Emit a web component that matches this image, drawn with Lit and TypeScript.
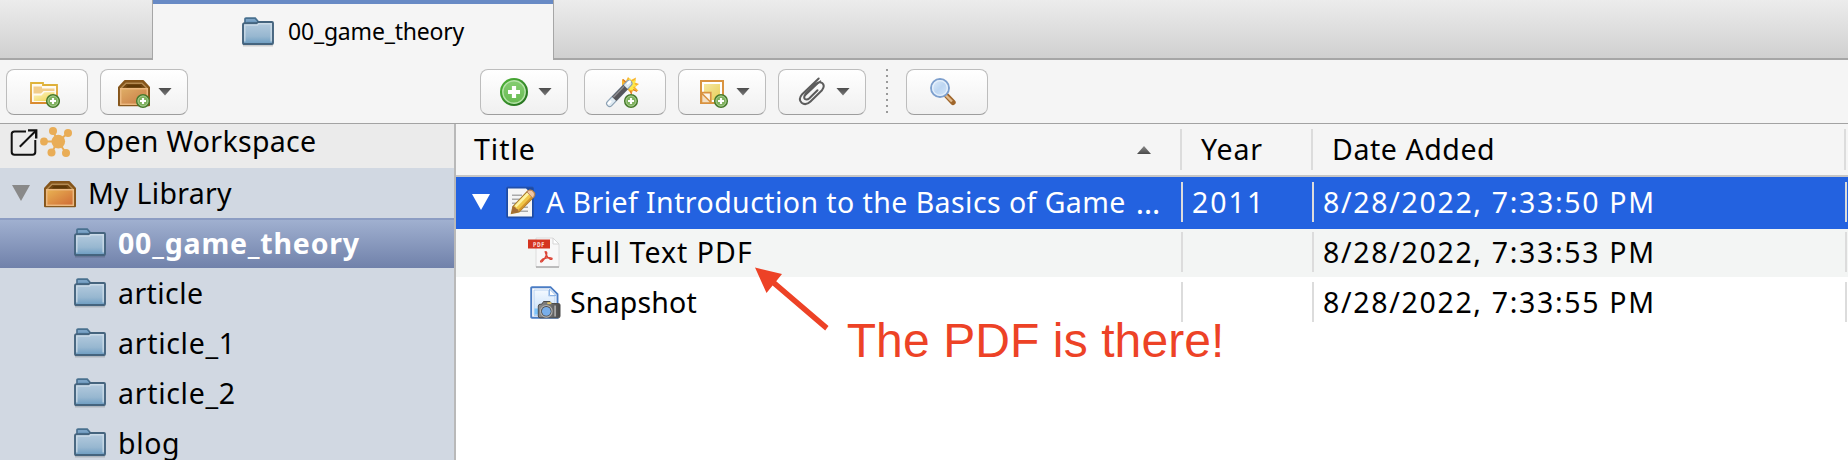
import { LitElement, html, svg, css } from "lit";
import { customElement, property } from "lit/decorators.js";
import { classMap } from "lit/directives/class-map.js";

const badge = (cx: number, cy: number) => svg`
  <g transform="translate(${cx} ${cy})">
    <circle r="6.3" fill="#7db05c" stroke="#47792c" stroke-width="1.5"/>
    <circle r="5" fill="none" stroke="#a9cd92" stroke-width="1"/>
    <path d="M-3 0H3M0-3V3" stroke="#fff" stroke-width="2.2"/>
  </g>`;

const box = (id: string, face1: string, face2: string) => svg`
  <linearGradient id="${id}" x1="0" y1="0" x2="1" y2="1">
    <stop offset="0" stop-color="${face1}"/><stop offset="1" stop-color="${face2}"/>
  </linearGradient>
  <path d="M7 1H25L31 7.5V26H1V7.5Z" fill="#8a5a1c"/>
  <path d="M7 1H25L31 7.5V25.2H1V7.5Z" fill="none" stroke="#85551b" stroke-width="2" stroke-linejoin="round"/>
  <path d="M7.5 2.6H24.5L29 7.8H3Z" fill="#704510"/>
  <path d="M3.2 8L8 3.2H24L28.8 8" fill="none" stroke="#b48a52" stroke-width="1.4"/>
  <path d="M8 7.6L10 5H22L24 7.6Z" fill="#5d3808"/>
  <rect x="2.7" y="8.7" width="26.6" height="15.6" fill="url(#${id})" stroke="#ecb980" stroke-width="1.5"/>`;

const icons: Record<string, () => unknown> = {
  folder: () => html`<svg width="32" height="31" viewBox="0 0 32 31">
    <linearGradient id="f" x1="0" y1="0" x2="0" y2="1">
      <stop offset="0" stop-color="#b6ccdf"/><stop offset=".65" stop-color="#97b7d0"/><stop offset="1" stop-color="#6c9cc1"/>
    </linearGradient>
    <path d="M1 28.3H31" stroke="#000" stroke-opacity=".16" stroke-width="2.4"/>
    <path d="M3 7V2.2Q3 1.2 4 1.2H13.2L17 5.5V8H3Z" fill="#7ba3c6" stroke="#48708f" stroke-width="1.7"/>
    <path d="M4.5 5.5H14" stroke="#5585ad" stroke-width="1.6"/>
    <path d="M1 8Q1 6.3 2.5 6.3H14.5L16 5H30Q31 5 31 6V26Q31 27 30 27H2Q1 27 1 26Z" fill="url(#f)" stroke="#45647e" stroke-width="1.9"/>
    <path d="M2.8 24.5V7.9H15.6L16.6 6.8H29.2V24.5" fill="none" stroke="#d3e0eb" stroke-opacity=".75" stroke-width="1.5"/>
  </svg>`,
  library: () => html`<svg width="32" height="27" viewBox="0 0 32 27">${box("b1", "#e9b353", "#cf6a35")}</svg>`,
  newCollection: () => html`<svg width="36" height="36" viewBox="0 0 36 36">
    <linearGradient id="nc" x1="0" y1="0" x2="0" y2="1"><stop offset="0" stop-color="#dfb43a"/><stop offset="1" stop-color="#d98a2f"/></linearGradient>
    <linearGradient id="nf" x1="0" y1="0" x2="1" y2="1"><stop offset="0" stop-color="#fbf3c0"/><stop offset="1" stop-color="#f0d24e"/></linearGradient>
    <path d="M7 9H19V11H33V29H7Z" fill="#fffaf0" stroke="url(#nc)" stroke-width="1.8"/>
    <path d="M9.5 12.5H18V14.5H30.5V17H19.5L17 19.5H9.5Z" fill="#f2cd8a"/>
    <path d="M9.8 21.5H17.5L20.5 18.3H30.5V27H9.8Z" fill="url(#nf)"/>
    ${badge(29, 27)}
  </svg>`,
  newLibrary: () => html`<svg width="36" height="36" viewBox="0 0 36 36">
    <g transform="translate(0 6)">${box("b2", "#dfae66", "#c97a45")}</g>${badge(25, 27)}
  </svg>`,
  add: () => html`<svg width="36" height="36" viewBox="0 0 36 36">
    <linearGradient id="a1" x1="0" y1="0" x2="1" y2="1"><stop offset="0" stop-color="#52b93a"/><stop offset="1" stop-color="#1f691b"/></linearGradient>
    <linearGradient id="a2" x1="0" y1="0" x2="0" y2="1"><stop offset="0" stop-color="#85cd72"/><stop offset="1" stop-color="#68bb52"/></linearGradient>
    <circle cx="16" cy="18" r="14" fill="url(#a1)"/>
    <circle cx="16" cy="18" r="11.2" fill="url(#a2)" stroke="#b5e2a8" stroke-width="1.4"/>
    <path d="M10 18H22M16 12V24" stroke="#fff" stroke-width="4.2"/>
  </svg>`,
  wand: () => html`<svg width="37" height="36" viewBox="0 0 37 36">
    <path d="M20 5L24 7L26 3L29 6L34 3.5L33 8.5L37 10L33 13L36.5 17L31 16.5L29.5 20L26 16L20 12Z" fill="#f9b52c"/>
    <path d="M24 8L28 4L30 7.5L34 5.5L32.5 10L35 12L31 13L33 16L28 16Z" fill="#fde94a"/>
    <path d="M21 5.5L24 8.5M35 17.5L31 15.5M29.5 20L28.5 17" stroke="#e07a28" stroke-width="1.3"/>
    <path d="M7.6 29.5L27 9.4" stroke="#8ba0b3" stroke-width="7" stroke-linecap="round"/>
    <path d="M7.6 29.5L27 9.4" stroke="#dfeaf2" stroke-width="4.8" stroke-linecap="round"/>
    <path d="M12.1 24.9L23.6 13" stroke="#55555a" stroke-width="6.2"/>
    <path d="M11.4 23.2L22 12.2" stroke="#8d8d92" stroke-width="1.5"/>
    <path d="M6.5 29.5L8.5 27.5M25.8 9.5L27.8 7.5" stroke="#fff" stroke-width="2.2" stroke-linecap="round"/>
    ${badge(29, 27)}
  </svg>`,
  note: () => html`<svg width="36" height="36" viewBox="0 0 36 36">
    <linearGradient id="n" x1="0" y1="0" x2="1" y2="1"><stop offset="0" stop-color="#f6e7a0"/><stop offset="1" stop-color="#e8cf58"/></linearGradient>
    <rect x="5" y="7" width="22" height="22" fill="#fff" stroke="#d99340" stroke-width="2"/>
    <rect x="8" y="10" width="16" height="16" fill="url(#n)"/>
    <path d="M5 18H15.5V29H5Z" fill="#fdf6ea"/>
    <path d="M5 18.7H14.8V29" fill="none" stroke="#d99340" stroke-width="1.8"/>
    <path d="M5.5 19L15 28.5V29H5.5Z" fill="#f3dfc2" stroke="#d99340" stroke-width="1.6"/>
    ${badge(25, 27)}
  </svg>`,
  clip: () => html`<svg width="36" height="36" viewBox="0 0 36 36">
    <g fill="none" stroke="#5c5c5c" stroke-width="2" stroke-linecap="round" stroke-linejoin="round">
      <path d="M22.7 4.5L6.2 20.2Q1.8 25.5 5.6 28.8Q9.8 32 14.5 27.5L26 16.2Q29.4 11.8 26.2 9Q23 7 19.6 10.2L9.6 20Q7.2 23.2 8.9 25Q11 26.4 13.4 24.2L21.5 16.2"/>
      <path d="M24.5 7L9 21.8" stroke-width="1.3"/>
    </g>
  </svg>`,
  search: () => html`<svg width="36" height="36" viewBox="0 0 36 36">
    <linearGradient id="s" x1="0" y1="0" x2="1" y2="1"><stop offset="0" stop-color="#e4effb"/><stop offset=".5" stop-color="#bdd6f2"/><stop offset="1" stop-color="#d6e7f9"/></linearGradient>
    <path d="M22.5 21.5L29 28.3" stroke="#a0662b" stroke-width="5.4" stroke-linecap="round"/>
    <path d="M21.5 21L28 27.5" stroke="#e0b98c" stroke-width="2.4"/>
    <circle cx="16" cy="14" r="9" fill="url(#s)" stroke="#7d9fcd" stroke-width="1.9"/>
    <circle cx="16" cy="14" r="7.3" fill="none" stroke="#e6f0fb" stroke-width="1.3"/>
  </svg>`,
  external: () => html`<svg width="30" height="30" viewBox="0 0 30 30">
    <g fill="none" stroke="#111" stroke-width="2">
      <path d="M16 3.4H4.5Q1.7 3.4 1.7 6V24Q1.7 26.8 4.5 26.8H22.5Q25.3 26.8 25.3 24V12"/>
      <path d="M9.8 18.8L25.6 3"/><path d="M18 2.4H26.2V10.5" stroke-width="2.4"/>
    </g>
  </svg>`,
  workspace: () => html`<svg width="32" height="32" viewBox="0 0 32 32">
    <g fill="#e9ad57" stroke="#e9ad57" stroke-width="2">
      <path d="M18 15.5L13 5M18 15.5L28 7M18 15.5H4M18 15.5L11.5 26.5M18 15.5L26 27"/>
      <g stroke="none"><circle cx="18.3" cy="15.6" r="6.8"/><circle cx="13" cy="5" r="4"/><circle cx="28" cy="7" r="4"/>
      <circle cx="4" cy="15.5" r="3.9"/><circle cx="11.5" cy="26.6" r="4"/><circle cx="26" cy="27" r="4"/></g>
    </g>
  </svg>`,
  article: () => html`<svg width="30" height="33" viewBox="0 0 30 33">
    <rect x=".7" y="1.2" width="26.6" height="30.6" rx="1" fill="#1c4aa4" stroke="#2450a8" stroke-width="1"/>
    <path d="M2 2.5H20L26 8V30.5H2Z" fill="#f5f5f5"/>
    <path d="M6 9.2H16M6 13.2H14M6 17.2H11M17 17.2H22M6 21.2H9M16 21.2H22M14 25.2H22" stroke="#aaa" stroke-width="1.5"/>
    <path d="M5.5 27.3L7 20.5L22 4.8Q25.5 3 28.3 6.6Q29.4 8.6 28 10.6L13 25.8Z" fill="#f0c648" stroke="#a87a2c" stroke-width="1.3"/>
    <path d="M9.5 20.5L22.5 7" stroke="#fdf3a0" stroke-width="2.6"/>
    <path d="M13 24.5L26.5 10.6" stroke="#d3942c" stroke-width="1.8"/>
    <path d="M21 5.9L23 4.2Q26 3.4 28.2 6.8Q29 9 27.7 10.9L26.6 12Z" fill="#f0c7a4" stroke="#b98560" stroke-width="1"/>
    <path d="M5.5 27.3L7 20.7Q9.5 20.5 10 22.5Q12.6 23 13 25.8Z" fill="#a36d35"/>
  </svg>`,
  pdf: () => html`<svg width="32" height="33" viewBox="0 0 32 33">
    <path d="M8 2H25L31 8V31H8Z" fill="#f8f8f8" stroke="#dcdcdc"/>
    <path d="M8 31H31" stroke="#aaa" stroke-width="1.4"/>
    <path d="M25 2V8H31Z" fill="#fff" stroke="#d5d5d5"/>
    <rect y="3.5" width="22" height="9" fill="#d4341f"/>
    <text x="11" y="10.6" text-anchor="middle" font-family="DejaVu Sans" font-size="6.6" font-weight="700" fill="#fbdcd6" textLength="12" lengthAdjust="spacingAndGlyphs">PDF</text>
    <path d="M17.2 15.8Q19.3 15.3 18.6 18.5Q17 22.8 14.2 25.5Q12.4 26.8 12.6 25Q14 23 18 22Q22 21.2 24 22.3Q24.4 23.8 22.4 23.3Q18.6 21.5 17.2 15.8Z" fill="none" stroke="#dc4638" stroke-width="1.3"/>
  </svg>`,
  snapshot: () => html`<svg width="31" height="33" viewBox="0 0 31 33">
    <linearGradient id="sn" x1="0" y1="0" x2="0" y2="1"><stop offset="0" stop-color="#f4f9ff"/><stop offset="1" stop-color="#c3ddf9"/></linearGradient>
    <linearGradient id="cm" x1="0" y1="0" x2="1" y2="0"><stop offset="0" stop-color="#8c8c8c"/><stop offset=".6" stop-color="#6b6b6b"/><stop offset="1" stop-color="#484848"/></linearGradient>
    <path d="M2 1.2H20.5L27.5 8.2V31.8H2Q1.2 31.8 1.2 31V2Q1.2 1.2 2 1.2Z" fill="#fff" stroke="#4a7cc4" stroke-width="1.9"/>
    <path d="M4 4H18.5V10H25V29.5H4Z" fill="url(#sn)" stroke="#a9c8ee" stroke-width=".8"/>
    <path d="M19.5 3V9.5H26Z" fill="#fff" stroke="#8db3e4" stroke-width="1"/>
    <rect x="4.5" y="22.5" width="6" height="6" fill="#7cc3fa"/>
    <path d="M9 18.5L12 18L13.5 15.5H20L21.5 17.5H28.5Q30 17.5 30 19V30Q30 31.8 28.5 31.8H10Q8.3 31.8 8.3 30V20Z" fill="url(#cm)" stroke="#4c4c4c" stroke-width="1"/>
    <rect x="24.2" y="19.5" width="1.8" height="11" fill="#a6a6a6"/>
    <rect x="17.3" y="16.2" width="4" height="1.9" fill="#e2c56d"/>
    <circle cx="16.3" cy="25.3" r="5.8" fill="#4c4c4c" stroke="#b3b3b3" stroke-width="1.1"/>
    <circle cx="16.3" cy="25.3" r="4.4" fill="#78aeea"/>
  </svg>`,
};

@customElement("tool-button")
class ToolButton extends LitElement {
  static styles = css`
    :host { display: block; width: 82px; height: 46px; box-sizing: border-box; border: 1px solid #bdbdbd;
      border-bottom-color: #9d9d9d; border-radius: 8px; background: linear-gradient(#fff, #f0f0f0); }
    :host([menu]) { width: 88px; }
    .in { display: flex; align-items: center; height: 44px; padding-left: 17px; }
    .in > svg { flex: none; }
    .arrow { width: 14px; height: 8px; margin: 0 0 1px 4px; background: linear-gradient(#4c4c4c, #7c7c7c);
      clip-path: polygon(0 0, 100% 0, 50% 100%); }
  `;
  @property() icon = "";
  @property({ type: Boolean, reflect: true }) menu = false;
  render() {
    return html`<div class="in">${icons[this.icon]()}${this.menu ? html`<span class="arrow"></span>` : ""}</div>`;
  }
}

const collections = [
  { name: "00_game_theory", cls: "selected" },
  { name: "article", cls: "w1" },
  { name: "article_1", cls: "w2" },
  { name: "article_2", cls: "w2" },
  { name: "blog", cls: "w3" },
];

const items = [
  { icon: "article", title: "A Brief Introduction to the Basics of Game", more: true, year: "2011", added: "8/28/2022, 7:33:50 PM", cls: "parent" },
  { icon: "pdf", title: "Full Text PDF", year: "", added: "8/28/2022, 7:33:53 PM", cls: "child odd" },
  { icon: "snapshot", title: "Snapshot", year: "", added: "8/28/2022, 7:33:55 PM", cls: "child" },
];

@customElement("app-root")
export class AppRoot extends LitElement {
  static styles = css`
    :host { display: flex; flex-direction: column; position: relative; height: 460px; overflow: hidden; box-sizing: border-box;
      background: #f5f5f5; color: #000; font: 28.5px "Noto Sans", sans-serif; white-space: nowrap; }
    svg { display: block; flex: none; }
    .tabs { display: flex; height: 60px; flex: none; }
    .strip { box-sizing: border-box; background: linear-gradient(#ececec, #d0d0d0); border-bottom: 2px solid #a6a6a6; }
    .strip.left { width: 153px; border-right: 1px solid #a6a6a6; }
    .strip.right { flex: 1; border-left: 1px solid #a6a6a6; }
    .tab { box-sizing: border-box; width: 400px; border-top: 4px solid #688ac5; display: flex; align-items: flex-start; padding-left: 89px; }
    .tab svg { margin-top: 13px; }
    .tab span { font-size: 23px; line-height: 30px; margin: 12px 0 0 14px; letter-spacing: -.2px; }
    .toolbar { display: flex; height: 63px; flex: none; padding-left: 6px; align-items: flex-start; gap: 12px;
      box-sizing: border-box; padding-top: 9px; }
    .gap { width: 268px; }
    .magic { margin-left: 4px; }
    .divider { width: 2px; height: 46px; margin: 0 6px 0 8px; background: repeating-linear-gradient(#9a9a9a 0 2px, transparent 2px 6px); }
    .main { flex: 1; display: flex; border-top: 1px solid #a3a3a3; min-height: 0; }
    .side { width: 454px; flex: none; background: #d1d8e2; border-right: 2px solid #b9b9b9; overflow: hidden; }
    .row { display: flex; align-items: center; height: 50px; box-sizing: border-box; }
    .open { height: 44px; background: #ebebeb; padding: 0 0 10px 10px; letter-spacing: .32px; }
    .open .ext { margin-top: 3px; } .open .ws { margin: 2px 0 0 0; }
    .open span { margin-left: 12px; line-height: 34px; }
    .lib { padding-left: 12px; letter-spacing: .27px; }
    .lib svg { margin: 2px 0 0 14px; } .lib span { margin-left: 12px; }
    .twisty { width: 18px; height: 16px; background: #898989; clip-path: polygon(0 0, 100% 0, 50% 100%); }
    .col { padding-left: 74px; }
    .col span { margin-left: 12px; }
    .selected { background: linear-gradient(#8c9dc3 2px, #a0b0d0 2px, #7081aa); color: #fff; font-weight: 700; letter-spacing: .8px; }
    .w1 { letter-spacing: .43px; } .w2 { letter-spacing: .7px; } .w3 { letter-spacing: .63px; }
    .table { flex: 1; background: #fff; min-width: 0; }
    .head, .item { display: grid; grid-template-columns: 727px 131px 1fr; box-sizing: border-box; }
    .head { grid-template-columns: 726px 131px 1fr; }
    .cell { display: flex; align-items: center; }
    .sep { width: 2px; height: 40px; margin-left: auto; background: #dcdcdc; }
    .head { height: 53px; background: #f5f5f5; border-bottom: 2px solid #c6c6c6; padding: 0 2px 1px 0; }
    .head .sep { height: 41px; }
    .head .title { padding-left: 18px; letter-spacing: .97px; }
    .head .year { padding-left: 19px; letter-spacing: .8px; }
    .head .date { padding-left: 19px; letter-spacing: .57px; }
    .sort { width: 14px; height: 8px; margin: 2px 29px 0 auto; background: linear-gradient(#8a8a8a, #4a4a4a); clip-path: polygon(50% 0, 100% 100%, 0 100%); }
    .sort + .sep { margin-left: 0; }
    .item { height: 50px; padding-right: 1px; }
    .item .year { padding-left: 9px; letter-spacing: 2px; }
    .item .date { padding-left: 9px; letter-spacing: 1.67px; }
    .parent { height: 52px; padding-bottom: 2px; background: #2362e0; color: #fff; }
    .parent .title { padding-left: 16px; letter-spacing: .43px; }
    .parent .twisty { background: #fff; }
    .parent .icon { margin: 0 0 0 16px; } .parent .text { margin-left: 10px; }
    .dots { margin-left: 10px; letter-spacing: 0; font-size: 31px; line-height: 39px; }
    .child .title { padding-left: 72px; letter-spacing: .17px; }
    .child .icon { margin-left: 2px; } .child .text { margin-left: 9px; }
    .odd { height: 48px; padding-bottom: 2px; background: #f3f5f4; }
    .odd .title { letter-spacing: 1.02px; } .odd .icon { margin-left: 0; } .odd .text { margin-left: 10px; }
    .annotation { position: absolute; left: 0; top: 0; width: 1848px; height: 460px; pointer-events: none; }
    .annotation text { font: 48px "Liberation Sans", Arial, sans-serif; letter-spacing: .1px; }
  `;

  render() {
    return html`
      <div class="tabs">
        <div class="strip left"></div>
        <div class="tab">${icons.folder()}<span>00_game_theory</span></div>
        <div class="strip right"></div>
      </div>
      <div class="toolbar">
        <tool-button icon="newCollection"></tool-button>
        <tool-button icon="newLibrary" menu></tool-button>
        <div class="gap"></div>
        <tool-button icon="add" menu></tool-button>
        <tool-button class="magic" icon="wand"></tool-button>
        <tool-button icon="note" menu></tool-button>
        <tool-button icon="clip" menu></tool-button>
        <div class="divider"></div>
        <tool-button icon="search"></tool-button>
      </div>
      <div class="main">
        <div class="side">
          <div class="row open"><div class="ext">${icons.external()}</div><div class="ws">${icons.workspace()}</div><span>Open Workspace</span></div>
          <div class="row lib"><i class="twisty"></i>${icons.library()}<span>My Library</span></div>
          ${collections.map((c) => html`<div class=${classMap({ row: true, col: true, [c.cls]: true })}>${icons.folder()}<span>${c.name}</span></div>`)}
        </div>
        <div class="table">
          <div class="head">
            <div class="cell title">Title<i class="sort"></i><i class="sep"></i></div>
            <div class="cell year">Year<i class="sep"></i></div>
            <div class="cell date">Date Added<i class="sep"></i></div>
          </div>
          ${items.map((i) => html`<div class="item ${i.cls}">
            <div class="cell title">${i.more ? html`<i class="twisty"></i>` : ""}<div class="icon">${icons[i.icon]()}</div><span class="text">${i.title}</span>${i.more ? html`<span class="dots">…</span>` : ""}<i class="sep"></i></div>
            <div class="cell year">${i.year}<i class="sep"></i></div>
            <div class="cell date">${i.added}<i class="sep"></i></div>
          </div>`)}
        </div>
      </div>
      <svg class="annotation" viewBox="0 0 1848 460" fill="#ed4226">
        <path d="M755 267.5L782 274L776.2 281.2L828.5 326L825.2 330.5L772.6 285.6L766.5 293Z"/>
        <text x="846.7" y="357">The PDF is there!</text>
      </svg>`;
  }
}
